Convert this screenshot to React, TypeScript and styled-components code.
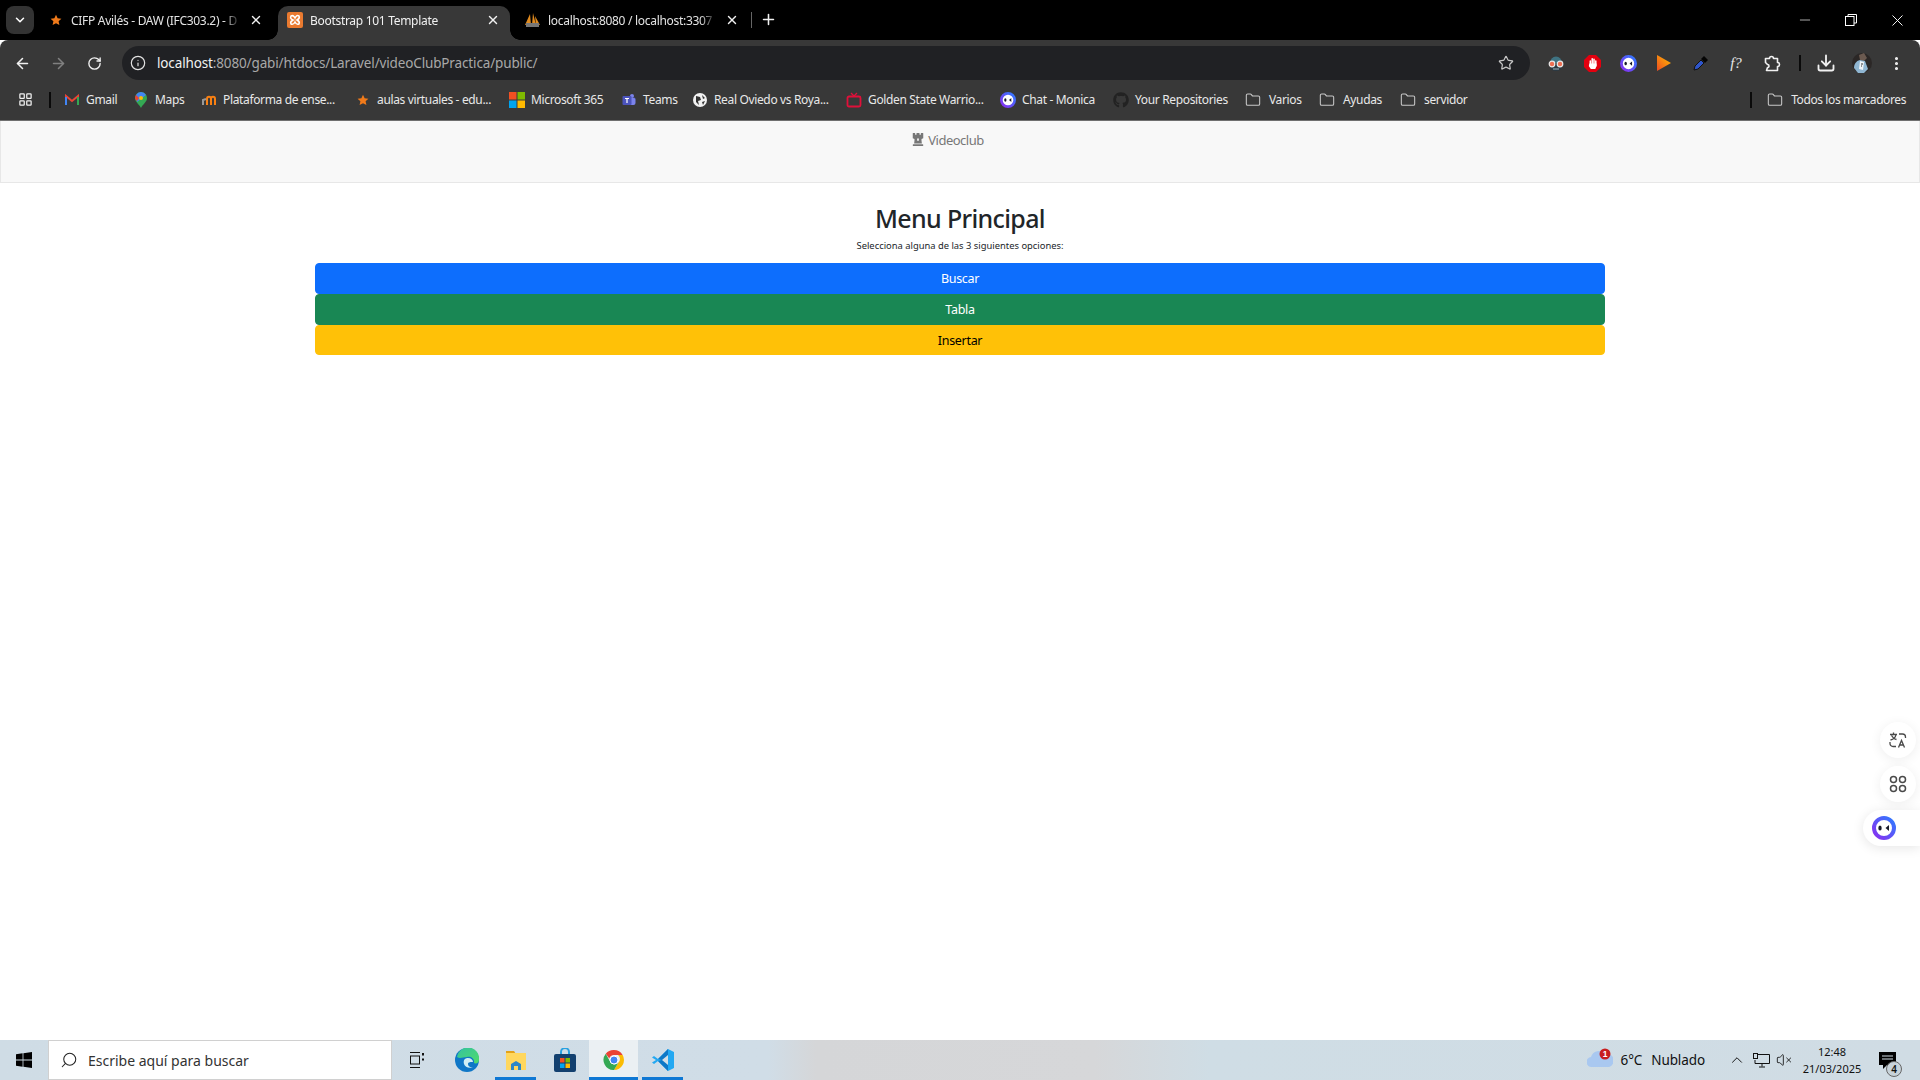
import React from "react";
import styled, { createGlobalStyle } from "styled-components";
import {
  ArrowLeft,
  ArrowRight,
  ChevronDown,
  ChevronUp,
  Download,
  Folder,
  Info,
  LayoutGrid,
  Minus,
  MoreVertical,
  Plus,
  RotateCw,
  Search,
  Star,
  VolumeX,
  X,
} from "lucide-react";
import { FaChessRook, FaGithub } from "react-icons/fa";

const ui = '"Noto Sans", "Open Sans", "Liberation Sans", sans-serif';

const GlobalStyle = createGlobalStyle`
  html, body { margin: 0; padding: 0; height: 100%; background: #fff; overflow: hidden; }
  * { box-sizing: border-box; }
  body { font-family: ${ui}; }
`;

// Small drawings
const MiniStar = () => (
  <svg width="12" height="12" viewBox="0 0 12 12">
    <path d="M6 .8l1.600 3.500 3.800.4-2.800 2.600.8 3.800L6 9.200l-3.400 1.900.8-3.800L.6 4.700l3.800-.4z" fill="#f07a1a" />
  </svg>
);
const Xampp = () => (
  <svg width="16" height="16" viewBox="0 0 16 16">
    <rect width="16" height="16" rx="2" fill="#ea7a30" />
    <path d="M4 4c2-1 3 0 4 2 1-2 2-3 4-2 1 2 0 3-2 4 2 1 3 2 2 4-2 1-3 0-4-2-1 2-2 3-4 2-1-2 0-3 2-4-2-1-3-2-2-4z" fill="none" stroke="#fff" strokeWidth="1.5" />
  </svg>
);
const Pma = () => (
  <svg width="17" height="16" viewBox="0 0 17 16">
    <path d="M1 13L6 2l1 11zM8 13l1-12 3 12zM12 13l-1-9 5 9z" fill="#e08a1e" />
    <rect x="2" y="11" width="13" height="4" fill="#777" />
  </svg>
);
const Gmail = () => (
  <svg width="14" height="12" viewBox="0 0 14 12">
    <path d="M1 11V2l6 5 6-5v9" fill="none" stroke="#ea4335" strokeWidth="2" />
    <path d="M1 11V3" stroke="#4285f4" strokeWidth="2" />
    <path d="M13 11V3" stroke="#34a853" strokeWidth="2" />
  </svg>
);
const Maps = () => (
  <svg width="12" height="16" viewBox="0 0 12 16">
    <path d="M6 0a6 6 0 0 1 6 6c0 4-4 6-6 10C4 12 0 10 0 6a6 6 0 0 1 6-6z" fill="#34a853" />
    <path d="M6 0a6 6 0 0 1 5 3L2 10 1 3a6 6 0 0 1 5-3z" fill="#4285f4" />
    <path d="M1 3l3 3-2 3C1 8 0 7 0 6a6 6 0 0 1 1-3z" fill="#ea4335" />
    <circle cx="6" cy="6" r="2" fill="#fbbc04" />
  </svg>
);
const Moodle = () => (
  <svg width="14" height="12" viewBox="0 0 14 12">
    <path d="M5 11V5c0-3 4-3 4 0v6M9 5c0-3 4-3 4 0v6" fill="none" stroke="#f98012" strokeWidth="2" />
    <path d="M1 11V6l3-1" fill="none" stroke="#999" strokeWidth="2" />
  </svg>
);
const Microsoft = () => (
  <svg width="16" height="16" viewBox="0 0 16 16">
    <rect width="7.5" height="7.5" fill="#f25022" />
    <rect x="8.5" width="7.5" height="7.5" fill="#7fba00" />
    <rect y="8.5" width="7.5" height="7.5" fill="#00a4ef" />
    <rect x="8.5" y="8.5" width="7.5" height="7.5" fill="#ffb900" />
  </svg>
);
const Teams = () => (
  <svg width="14" height="14" viewBox="0 0 14 14">
    <circle cx="10" cy="3" r="2" fill="#7b83eb" />
    <circle cx="12" cy="6" r="1.5" fill="#5059c9" />
    <rect x="7" y="5" width="6.5" height="7" rx="2" fill="#7b83eb" />
    <rect x="0.5" y="3" width="9" height="9" rx="1" fill="#4b53bc" />
    <path d="M3 5.5h4M5 5.5V10" stroke="#fff" strokeWidth="1.2" />
  </svg>
);
const Globe = () => (
  <svg width="14" height="14" viewBox="0 0 14 14">
    <circle cx="7" cy="7" r="7" fill="#f1f1f1" />
    <path d="M3 3l4 1 1 3-3 1 1 4-3-3zM9 2l3 3-2 1zM9 9l3-1-2 4z" fill="#333" />
  </svg>
);
const Tv = () => (
  <svg width="16" height="16" viewBox="0 0 16 16">
    <path d="M5 1l3 3 3-3" fill="none" stroke="#e0103a" strokeWidth="1.3" />
    <rect x="1.5" y="4.5" width="13" height="10" rx="1.5" fill="none" stroke="#e0103a" strokeWidth="1.8" />
  </svg>
);
const MonicaFace = ({ size = 16 }: { size?: number }) => (
  <svg width={size} height={size} viewBox="0 0 24 24">
    <defs>
      <linearGradient id="monica" x1="0" y1="1" x2="1" y2="0">
        <stop offset="0" stopColor="#8a2ff0" />
        <stop offset="1" stopColor="#2f7bff" />
      </linearGradient>
    </defs>
    <circle cx="12" cy="12" r="10" fill="#fff" stroke="url(#monica)" strokeWidth="4" />
    <ellipse cx="8" cy="12" rx="1.7" ry="2.6" fill="#171a2a" />
    <path d="M17 9l-3.5 3 3.5 3z" fill="#171a2a" />
  </svg>
);
const Spy = () => (
  <svg width="18" height="18" viewBox="0 0 18 18">
    <path d="M3 9a6 6.500 0 0 1 12 0z" fill="#3f7382" />
    <path d="M4 11h10v3c0 2-2 3-5 3s-5-1-5-3z" fill="#2b3a44" />
    <path d="M6 15h6" stroke="#9fb0b8" strokeWidth="1" />
    <circle cx="5" cy="10" r="2.800" fill="#ee6f52" stroke="#e8e8e8" strokeWidth="1.200" />
    <circle cx="13" cy="10" r="2.800" fill="#ee6f52" stroke="#e8e8e8" strokeWidth="1.200" />
  </svg>
);
const AdBlock = () => (
  <svg width="17" height="17" viewBox="0 0 17 17">
    <path d="M5 0h7l5 5v7l-5 5H5l-5-5V5z" fill="#e3000f" />
    <path d="M6.300 11V6M8.200 10V3.800M10 10V4.300M11.800 11V6" stroke="#fff" strokeWidth="1.500" strokeLinecap="round" />
    <path d="M5.600 8l-.8 3 2 3h4.500l1.200-3V8.500H5.600z" fill="#fff" />
  </svg>
);
const PlayExt = () => (
  <svg width="16" height="18" viewBox="0 0 16 18">
    <defs>
      <linearGradient id="play" x1="0" y1="1" x2="1" y2="0">
        <stop offset="0" stopColor="#ee4b22" />
        <stop offset="1" stopColor="#ffc000" />
      </linearGradient>
    </defs>
    <path d="M1 1l14 8-14 8z" fill="url(#play)" />
  </svg>
);
const Dropper = () => (
  <svg width="17" height="17" viewBox="0 0 17 17">
    <path d="M3 11l6-6 3 3-6 6-4 1z" fill="#2f55c9" stroke="#111" />
    <path d="M9 4l3-3 4 4-3 3z" fill="#050505" />
  </svg>
);
const Puzzle = () => (
  <svg width="17" height="17" viewBox="0 0 17 17">
    <path d="M1.5 3.5h4a2 2 0 0 1 4 0h4v4a2 2 0 0 1 0 4v4h-11l1-3a1.5 1.5 0 0 0 0-3l-2-2z" fill="none" stroke="#f1f1f1" strokeWidth="1.6" strokeLinejoin="round" />
  </svg>
);
const Avatar = () => (
  <svg width="20" height="20" viewBox="0 0 20 20">
    <circle cx="10" cy="10" r="10" fill="#2b2726" />
    <path d="M12 0l3 5-3 3-4-1-1-5z" fill="#6b5a50" />
    <path d="M2 15c0-4 2-7 6-8l5 1 3 8-4 4H6z" fill="#8fb6d2" />
    <path d="M8 8l4 1-1 8-4-1z" fill="#eef3f7" />
    <path d="M9 11h2M9 13h1" stroke="#333" strokeWidth="1" />
  </svg>
);
const Windows = () => (
  <svg width="16" height="16" viewBox="0 0 16 16">
    <path d="M0 2.2l6.6-.9v6.3H0zM7.4 1.2L16 0v7.6H7.4zM0 8.4h6.6v6.3L0 13.8zM7.4 8.4H16V16l-8.6-1.2z" fill="#000" />
  </svg>
);
const TaskView = () => (
  <svg width="16" height="16" viewBox="0 0 16 16" fill="none" stroke="#111" strokeWidth="1">
    <path d="M1 .5h10M1 15.5h10" />
    <rect x="1.5" y="4" width="9" height="8" />
    <path d="M14 1v2.5M14 6.5v2" strokeWidth="2" />
  </svg>
);
const Edge = () => (
  <svg width="24" height="24" viewBox="0 0 24 24">
    <defs>
      <linearGradient id="edge" x1="0" y1="0" x2="1" y2="1">
        <stop offset="0" stopColor="#35c1a0" />
        <stop offset="1" stopColor="#4fdc6a" />
      </linearGradient>
    </defs>
    <circle cx="12" cy="12" r="12" fill="#0f77c7" />
    <path d="M2 9a10.500 10.500 0 0 1 22 3c0 3-3 4-5 3 1-4-3-7-7-6-4 0-7 2-10 0z" fill="url(#edge)" />
    <path d="M13 10c-3 0-5 2-4 6 1 3 5 5 10 3-4 1-6-1-6-3 0-2 3-2 5-2 0-2-2-4-5-4z" fill="#cfeef4" />
  </svg>
);
const Explorer = () => (
  <svg width="22" height="22" viewBox="0 0 22 22">
    <path d="M1 2h8l2 3H1z" fill="#e3a21a" />
    <rect x="1" y="4" width="20" height="17" fill="#ffd75e" />
    <path d="M6 21v-6l5-3 5 3v6h-3v-4H9v4z" fill="#2b87c8" />
  </svg>
);
const Store = () => (
  <svg width="22" height="24" viewBox="0 0 22 24">
    <path d="M7 7V4a4 4 0 0 1 8 0v3" fill="none" stroke="#29a1e0" strokeWidth="2" />
    <rect y="6" width="22" height="18" rx="2" fill="#12406f" />
    <rect x="6" y="10" width="4.500" height="4.500" fill="#f25022" />
    <rect x="11.500" y="10" width="4.500" height="4.500" fill="#7fba00" />
    <rect x="6" y="15.500" width="4.500" height="4.500" fill="#00a4ef" />
    <rect x="11.500" y="15.500" width="4.500" height="4.500" fill="#ffb900" />
  </svg>
);
const Chrome = () => (
  <svg width="24" height="24" viewBox="0 0 48 48">
    <path d="M24 4a20 20 0 0 1 17.300 10H24a10 10 0 0 0-9.500 7L7.500 11.500A20 20 0 0 1 24 4z" fill="#ea4335" />
    <path d="M41.300 14A20 20 0 0 1 24 44l9-15a10 10 0 0 0-1-15z" fill="#fbbc04" />
    <path d="M7.500 11.500L16 27a10 10 0 0 0 17 2l-9 15A20 20 0 0 1 7.500 11.500z" fill="#34a853" />
    <circle cx="24" cy="24" r="8" fill="#4285f4" stroke="#fff" strokeWidth="2" />
  </svg>
);
const VsCode = () => (
  <svg width="24" height="24" viewBox="0 0 24 24">
    <path d="M17 1l6 3v16l-6 3L7 13l-4 3-2-1.500L5 12 1 9.500 3 8l4 3z" fill="#23a8f2" />
    <path d="M17 1v22L7 13l4-1-4-1z" fill="#0e78c7" />
    <path d="M17 7l-6 5 6 5z" fill="#d5dfe6" />
  </svg>
);
const Cloud = () => (
  <svg width="26" height="30" viewBox="0 0 26 30">
    <path d="M5 22a5 5 0 0 1-1-10 8 8 0 0 1 14-3 6 6 0 0 1 4 13z" fill="#a9c8f0" />
    <circle cx="18" cy="9" r="5.500" fill="#c81e1e" />
    <text x="18" y="12" fontSize="8.500" fontWeight="700" textAnchor="middle" fill="#fff" fontFamily="Liberation Sans, sans-serif">1</text>
  </svg>
);
const Network = () => (
  <svg width="17" height="15" viewBox="0 0 17 15" fill="none" stroke="#111" strokeWidth="1">
    <path d="M4 1.500h12.500v9H2V7" />
    <rect x="0.500" y="0.500" width="4" height="5" fill="#d0dce4" />
    <path d="M9 10.500v3M6 14h6" />
  </svg>
);
const Translate = () => (
  <svg width="18" height="18" viewBox="0 0 18 18" fill="none" stroke="#4a4a4a" strokeWidth="1.3">
    <path d="M1 3.500h7M4.500 1.500v2M7 3.500c-.5 3-3 5-5.500 5.500M2.500 4.500c1 2 3 3.500 5 4" />
    <path d="M10 3h3.500a3 3 0 0 1 3 3v1M1 11v1.500a3 3 0 0 0 3 3h3" />
    <path d="M9.500 16.500l3-7 3 7M10.500 14h4" />
  </svg>
);
const Clover = () => (
  <svg width="18" height="18" viewBox="0 0 18 18" fill="none" stroke="#4a4a4a" strokeWidth="1.500">
    <rect x="1.500" y="1.500" width="6" height="6" rx="3" />
    <rect x="10.500" y="1.500" width="6" height="6" rx="3" />
    <rect x="1.500" y="10.500" width="6" height="6" rx="3" />
    <rect x="10.500" y="10.500" width="6" height="6" rx="3" />
  </svg>
);

const folder = <Folder size={16} color="#c7c7c7" strokeWidth={1.6} />;

const bookmarks = [
  { icon: <Gmail />, label: "Gmail", gap: 6, w: 30, mr: 17 },
  { icon: <Maps />, label: "Maps", gap: 6, w: 29, mr: 17 },
  { icon: <Moodle />, label: "Plataforma de ense...", gap: 6, w: 110, mr: 22 },
  { icon: <MiniStar />, label: "aulas virtuales - edu...", gap: 6, w: 114, mr: 18 },
  { icon: <Microsoft />, label: "Microsoft 365", gap: 6, w: 73, mr: 17 },
  { icon: <Teams />, label: "Teams", gap: 6, w: 33, mr: 16 },
  { icon: <Globe />, label: "Real Oviedo vs Roya...", gap: 6, w: 115, mr: 17 },
  { icon: <Tv />, label: "Golden State Warrio...", gap: 6, w: 115, mr: 17 },
  { icon: <MonicaFace />, label: "Chat - Monica", gap: 6, w: 75, mr: 16 },
  { icon: <FaGithub size={16} color="#222" />, label: "Your Repositories", gap: 6, w: 92, mr: 18 },
  { icon: folder, label: "Varios", gap: 8, w: 31, mr: 19 },
  { icon: folder, label: "Ayudas", gap: 8, w: 38, mr: 19 },
  { icon: folder, label: "servidor", gap: 8, w: 42, mr: 0 },
];

const tabs = [
  { icon: <MiniStar />, title: "CIFP Avilés - DAW (IFC303.2) - D", active: false, w: 234, pl: 6, iconW: 21, pr: 15 },
  { icon: <Xampp />, title: "Bootstrap 101 Template", active: true, w: 232, pl: 9, iconW: 23, pr: 10 },
  { icon: <Pma />, title: "localhost:8080 / localhost:3307", active: false, w: 241, pl: 14, iconW: 24, pr: 12 },
];

const actions = [
  { label: "Buscar", bg: "#0d6efd", fg: "#fff" },
  { label: "Tabla", bg: "#198754", fg: "#fff" },
  { label: "Insertar", bg: "#ffc107", fg: "#000" },
];

export default function App() {
  const extensions = [
    <Spy key="spy" />,
    <AdBlock key="ab" />,
    <MonicaFace key="mon" size={17} />,
    <PlayExt key="play" />,
    <Dropper key="drop" />,
    <FontExt key="font">f?</FontExt>,
    <Puzzle key="puzzle" />,
  ];

  return (
    <>
      <GlobalStyle />
      <Screen>
        <TabStrip>
          <TabSearch>
            <ChevronDown size={14} color="#fff" strokeWidth={2.6} />
          </TabSearch>
          <Tabs>
            {tabs.map((tab) => (
              <Tab key={tab.title} $active={tab.active} $w={tab.w} $pl={tab.pl} $pr={tab.pr}>
                <TabIcon $w={tab.iconW}>{tab.icon}</TabIcon>
                <TabTitle>{tab.title}</TabTitle>
                <X size={14} color="#f1f1f1" strokeWidth={2.4} />
              </Tab>
            ))}
          </Tabs>
          <TabDivider />
          <NewTab>
            <Plus size={17} color="#f1f1f1" strokeWidth={2.2} />
          </NewTab>
          <WindowButtons>
            <WindowButton>
              <Minus size={16} color="#fff" strokeWidth={1} />
            </WindowButton>
            <WindowButton>
              <svg width="12" height="12" viewBox="0 0 12 12" fill="none" stroke="#fff">
                <rect x="0.5" y="2.5" width="8.500" height="9" />
                <path d="M3 2.500V.5h8.500v8.500H9" />
              </svg>
            </WindowButton>
            <WindowButton>
              <X size={19} color="#fff" strokeWidth={1.2} />
            </WindowButton>
          </WindowButtons>
        </TabStrip>

        <Toolbar>
          <NavButtons>
            <NavIcon>
              <ArrowLeft size={17} color="#f1f1f1" strokeWidth={2.2} />
            </NavIcon>
            <NavIcon>
              <ArrowRight size={17} color="#808080" strokeWidth={2.2} />
            </NavIcon>
            <NavIcon>
              <RotateCw size={15} color="#f1f1f1" strokeWidth={2.2} />
            </NavIcon>
          </NavButtons>
          <AddressBar>
            <SiteInfo>
              <Info size={16} color="#e3e3e3" strokeWidth={1.8} />
            </SiteInfo>
            <Url>
              <strong>localhost</strong>:8080/gabi/htdocs/Laravel/videoClubPractica/public/
            </Url>
            <Star size={16} color="#c7c7c7" strokeWidth={1.8} />
          </AddressBar>
          <Extensions>
            {extensions.map((ext) => (
              <ExtensionSlot key={ext.key}>{ext}</ExtensionSlot>
            ))}
          </Extensions>
          <ToolbarDivider />
          <ProfileArea>
            <Download size={20} color="#f1f1f1" strokeWidth={2.2} />
            <Avatar />
            <MoreVertical size={17} color="#f1f1f1" strokeWidth={2.4} />
          </ProfileArea>
        </Toolbar>

        <BookmarksBar>
          <AppsButton>
            <LayoutGrid size={15} color="#f1f1f1" strokeWidth={2} />
          </AppsButton>
          <BookmarkDivider />
          <BookmarkRow>
            {bookmarks.map((b) => (
              <Bookmark key={b.label} $mr={b.mr}>
                <BookmarkIcon $gap={b.gap}>{b.icon}</BookmarkIcon>
                <BookmarkLabel $w={b.w}>{b.label}</BookmarkLabel>
              </Bookmark>
            ))}
          </BookmarkRow>
          <AllBookmarks>
            <BookmarkDivider />
            <AllBookmarksLabel>
              {folder}
              <span>Todos los marcadores</span>
            </AllBookmarksLabel>
          </AllBookmarks>
        </BookmarksBar>

        <Page>
          <Navbar>
            <Brand>
              <FaChessRook size={14} />
              Videoclub
            </Brand>
          </Navbar>
          <Content>
            <Heading>Menu Principal</Heading>
            <Hint>Selecciona alguna de las 3 siguientes opciones:</Hint>
            <ActionList>
              {actions.map((a) => (
                <ActionButton key={a.label} $bg={a.bg} $fg={a.fg}>
                  {a.label}
                </ActionButton>
              ))}
            </ActionList>
          </Content>
          <SideDock>
            <DockCircle>
              <Translate />
            </DockCircle>
            <DockCircle>
              <Clover />
            </DockCircle>
            <DockPill>
              <MonicaFace size={24} />
            </DockPill>
          </SideDock>
        </Page>

        <Taskbar>
          <StartButton>
            <Windows />
          </StartButton>
          <SearchBox>
            <Search size={18} color="#222" strokeWidth={1.4} style={{ transform: "scaleX(-1)" }} />
            <span>Escribe aquí para buscar</span>
          </SearchBox>
          <TaskIcon $mr={1}>
            <TaskView />
          </TaskIcon>
          <TaskIcon>
            <Edge />
          </TaskIcon>
          <TaskIcon $marker={4}>
            <Explorer />
          </TaskIcon>
          <TaskIcon>
            <Store />
          </TaskIcon>
          <TaskIcon $marker={0} $active>
            <Chrome />
          </TaskIcon>
          <TaskIcon $marker={4}>
            <VsCode />
          </TaskIcon>
          <Tray>
            <Weather>
              <Cloud />
              <span>6°C</span>
              <span>Nublado</span>
            </Weather>
            <TrayIcons>
              <ChevronUp size={18} color="#111" strokeWidth={1.3} />
              <Network />
              <VolumeX size={16} color="#111" strokeWidth={1.3} />
            </TrayIcons>
            <Clock>
              <span>12:48</span>
              <span>21/03/2025</span>
            </Clock>
            <Notifications>
              <svg width="17" height="17" viewBox="0 0 17 17">
                <path d="M0 0h17v13H8l-4 4v-4H0z" fill="#000" />
                <path d="M3 4h11M3 7h11" stroke="#d0dce4" />
              </svg>
              <NotificationCount>4</NotificationCount>
            </Notifications>
          </Tray>
        </Taskbar>
      </Screen>
    </>
  );
}

const Screen = styled.div`
  display: flex;
  flex-direction: column;
  width: 1920px;
  height: 1080px;
  overflow: hidden;
`;

const TabStrip = styled.div`
  display: flex;
  align-items: flex-end;
  height: 40px;
  background: #000;
  padding-left: 6px;
`;

const TabSearch = styled.div`
  display: flex;
  align-items: center;
  justify-content: center;
  width: 28px;
  height: 28px;
  margin-bottom: 6px;
  border-radius: 8px;
  background: #333;
`;

const Tabs = styled.div`
  display: flex;
  align-items: flex-end;
  margin-left: 10px;
  height: 34px;
`;

const Tab = styled.div<{ $active: boolean; $w: number; $pl: number; $pr: number }>`
  position: relative;
  display: flex;
  align-items: center;
  width: ${(p) => p.$w}px;
  height: 34px;
  padding: 0 ${(p) => p.$pr}px 6px ${(p) => p.$pl}px;
  border-radius: 10px 10px 0 0;
  background: ${(p) => (p.$active ? "#383838" : "transparent")};
  color: ${(p) => (p.$active ? "#f1f1f1" : "#e3e3e3")};
  ${(p) =>
    p.$active &&
    `
    &::before, &::after {
      content: "";
      position: absolute;
      bottom: 0;
      width: 10px;
      height: 10px;
    }
    &::before {
      left: -10px;
      background: radial-gradient(circle at 0 0, #000 9.5px, #383838 10px);
    }
    &::after {
      right: -10px;
      background: radial-gradient(circle at 100% 0, #000 9.5px, #383838 10px);
    }
  `}
`;

const TabIcon = styled.span<{ $w: number }>`
  display: flex;
  flex: none;
  align-items: center;
  width: ${(p) => p.$w}px;
`;

const TabTitle = styled.span`
  flex: 1;
  margin-right: 8px;
  overflow: hidden;
  font-size: 12px;
  letter-spacing: -0.3px;
  white-space: nowrap;
  -webkit-mask-image: linear-gradient(90deg, #000 90%, transparent);
  mask-image: linear-gradient(90deg, #000 90%, transparent);
`;

const TabDivider = styled.div`
  width: 1px;
  height: 16px;
  margin: 0 0 12px 0;
  background: #666;
`;

const NewTab = styled.div`
  display: flex;
  margin: 0 0 12px 8px;
`;

const WindowButtons = styled.div`
  display: flex;
  margin-left: auto;
  height: 40px;
`;

const WindowButton = styled.div`
  display: flex;
  align-items: center;
  justify-content: center;
  width: 46px;
`;

const Toolbar = styled.div`
  display: flex;
  align-items: center;
  height: 40px;
  background: #383838;
  padding-top: 6px;
  border-radius: 8px 8px 0 0;
`;

const NavButtons = styled.div`
  display: flex;
  width: 122px;
  padding-left: 4px;
`;

const NavIcon = styled.div`
  display: flex;
  align-items: center;
  justify-content: center;
  width: 36px;
`;

const AddressBar = styled.div`
  display: flex;
  align-items: center;
  width: 1408px;
  height: 34px;
  padding-right: 16px;
  border-radius: 17px;
  background: #202124;
`;

const SiteInfo = styled.div`
  display: flex;
  align-items: center;
  justify-content: center;
  width: 30px;
  height: 30px;
  margin: 0 4px 0 1px;
`;

const Url = styled.div`
  flex: 1;
  font-size: 13.5px;
  letter-spacing: -0.14px;
  color: #a8a8a8;
  strong {
    font-weight: 400;
    color: #f1f1f1;
  }
`;

const Extensions = styled.div`
  display: flex;
  margin-left: 8px;
`;

const ExtensionSlot = styled.div`
  display: flex;
  align-items: center;
  justify-content: center;
  width: 36px;
`;

const FontExt = styled.span`
  font-family: "Liberation Serif", serif;
  font-style: italic;
  font-size: 15px;
  color: #e8e8e8;
`;

const ToolbarDivider = styled.div`
  width: 2px;
  height: 16px;
  margin-left: 9px;
  background: #0a0a0a;
`;

const ProfileArea = styled.div`
  display: flex;
  flex: 1;
  align-items: center;
  gap: 16px;
  padding-left: 15px;
`;

const BookmarksBar = styled.div`
  display: flex;
  align-items: center;
  height: 41px;
  padding: 0 14px 1px 18px;
  background: #383838;
  border-bottom: 1px solid #6f6f6f;
`;

const AppsButton = styled.div`
  display: flex;
  width: 31px;
`;

const BookmarkDivider = styled.div`
  width: 2px;
  height: 16px;
  background: #0a0a0a;
`;

const BookmarkRow = styled.div`
  display: flex;
  align-items: center;
  margin-left: 13px;
`;

const Bookmark = styled.div<{ $mr: number }>`
  display: flex;
  align-items: center;
  margin-right: ${(p) => p.$mr}px;
`;

const BookmarkIcon = styled.span<{ $gap: number }>`
  display: flex;
  flex: none;
  align-items: center;
  justify-content: center;
  width: 16px;
  margin-right: ${(p) => p.$gap}px;
`;

const BookmarkLabel = styled.span<{ $w: number }>`
  width: ${(p) => p.$w}px;
  font-size: 12px;
  letter-spacing: -0.35px;
  color: #e8e8e8;
  white-space: nowrap;
`;

const AllBookmarks = styled.div`
  display: flex;
  align-items: center;
  gap: 15px;
  margin-left: auto;
`;

const AllBookmarksLabel = styled.div`
  display: flex;
  align-items: center;
  gap: 8px;
  font-size: 12px;
  letter-spacing: -0.4px;
  color: #e8e8e8;
  white-space: nowrap;
`;

const Page = styled.main`
  position: relative;
  flex: 1;
  background: #fff;
`;

const Navbar = styled.nav`
  display: flex;
  justify-content: center;
  height: 62px;
  padding: 9px 25px 0 0;
  background: #f8f8f8;
  border: 1px solid #e7e7e7;
  border-top: none;
`;

const Brand = styled.a`
  display: flex;
  align-items: flex-start;
  gap: 3px;
  height: 20px;
  line-height: 20px;
  font-size: 13px;
  letter-spacing: -0.5px;
  color: #777;
  svg {
    margin-top: 2px;
  }
`;

const Content = styled.div`
  display: flex;
  flex-direction: column;
  align-items: center;
  width: 1290px;
  margin: 0 auto;
  padding-top: 16px;
`;

const Heading = styled.h2`
  margin: 0;
  font-size: 25px;
  font-weight: 500;
  letter-spacing: -0.65px;
  line-height: 38px;
  color: #212529;
`;

const Hint = styled.p`
  margin: 2px 0 10px;
  font-size: 9.4px;
  line-height: 14px;
  color: #212529;
`;

const ActionList = styled.div`
  display: flex;
  flex-direction: column;
  width: 100%;
`;

const ActionButton = styled.button<{ $bg: string; $fg: string }>`
  height: 31px;
  padding: 0;
  border: 1px solid ${(p) => p.$bg};
  border-radius: 4px;
  background: ${(p) => p.$bg};
  color: ${(p) => p.$fg};
  font-family: ${ui};
  font-size: 12.5px;
  letter-spacing: -0.3px;
  &:last-child {
    height: 30px;
  }
`;

const SideDock = styled.aside`
  position: absolute;
  top: 601px;
  right: 0;
  display: flex;
  flex-direction: column;
  align-items: flex-end;
  gap: 8px;
`;

const DockCircle = styled.div`
  display: flex;
  align-items: center;
  justify-content: center;
  width: 36px;
  height: 36px;
  margin-right: 4px;
  border-radius: 50%;
  background: #fff;
  box-shadow: 0 2px 12px rgba(0, 0, 0, 0.07);
`;

const DockPill = styled.div`
  display: flex;
  align-items: center;
  width: 57px;
  height: 36px;
  padding-left: 9px;
  border-radius: 18px 0 0 18px;
  background: #fff;
  box-shadow: 0 2px 12px rgba(0, 0, 0, 0.1);
`;

const Taskbar = styled.footer`
  display: flex;
  align-items: center;
  height: 40px;
  background: linear-gradient(90deg, #cfdce5 0%, #d0dde7 40%, #d5d6d8 42.500%, #d6d7d9 57%, #cfdde5 63%, #d0dce4 100%);
`;

const StartButton = styled.div`
  display: flex;
  align-items: center;
  justify-content: center;
  width: 48px;
`;

const SearchBox = styled.div`
  display: flex;
  align-items: center;
  gap: 10px;
  width: 344px;
  height: 40px;
  padding-left: 11px;
  background: #fff;
  border: 1px solid #d0d0d0;
  font-size: 14px;
  color: #333;
`;

const TaskIcon = styled.div<{ $marker?: number; $active?: boolean; $mr?: number }>`
  position: relative;
  display: flex;
  align-items: center;
  justify-content: center;
  width: 49px;
  height: 40px;
  margin-right: ${(p) => p.$mr ?? 0}px;
  background: ${(p) => (p.$active ? "#ebf0f3" : "transparent")};
  ${(p) =>
    p.$marker !== undefined &&
    `
    &::after {
      content: "";
      position: absolute;
      left: ${p.$marker}px;
      right: ${p.$marker}px;
      bottom: 0;
      height: 3px;
      background: #0f78d4;
    }
  `}
`;

const Tray = styled.div`
  display: flex;
  flex: 1;
  align-items: center;
  justify-content: flex-end;
  padding-right: 24px;
  font-size: 13px;
  color: #111;
`;

const Weather = styled.div`
  display: flex;
  align-items: center;
  gap: 9px;
  margin-right: 23px;
  font-size: 13.5px;
  letter-spacing: -0.1px;
  svg {
    margin-right: -1px;
  }
`;

const TrayIcons = styled.div`
  display: flex;
  align-items: center;
  gap: 6.500px;
`;

const Clock = styled.div`
  display: flex;
  flex-direction: column;
  align-items: center;
  width: 80px;
  margin-right: 7px;
  font-size: 11px;
  line-height: 17px;
`;

const Notifications = styled.div`
  position: relative;
  display: flex;
`;

const NotificationCount = styled.span`
  position: absolute;
  right: -6px;
  bottom: -8px;
  display: flex;
  align-items: center;
  justify-content: center;
  width: 16px;
  height: 16px;
  border: 1px solid #666;
  border-radius: 50%;
  background: #c8d3da;
  font-size: 10px;
  font-weight: 600;
`;
